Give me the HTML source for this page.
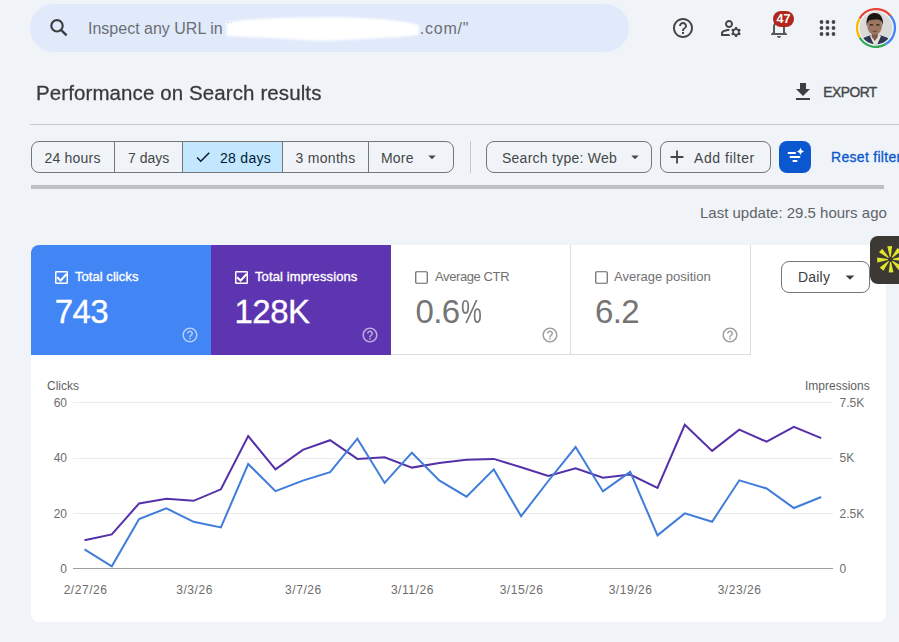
<!DOCTYPE html>
<html><head><meta charset="utf-8">
<style>
*{box-sizing:border-box;margin:0;padding:0}
html,body{width:899px;height:642px;overflow:hidden;background:#f0f4f9;font-family:"Liberation Sans",sans-serif;position:relative}
.a{position:absolute;white-space:nowrap;line-height:1}
#search{left:30px;top:4px;width:599px;height:48px;border-radius:24px;background:#e1eafb}
.chipg{left:31px;top:141px;width:423px;height:32px;border:1px solid #747775;border-radius:8px;overflow:hidden;display:flex}
.chipg div{height:30px;border-right:1px solid #747775;position:relative}
.chip{border:1px solid #747775;border-radius:8px;height:32px}
.t14{font-size:14px;color:#444746}
</style></head>
<body>
<div id="search" class="a"></div>
<svg class="a" style="left:44px;top:14px" width="28" height="28" viewBox="44 14 28 28"><circle cx="57" cy="25.8" r="5.7" fill="none" stroke="#3c4043" stroke-width="2.2"/><path d="M61 29.8 L66.6 35.4" stroke="#3c4043" stroke-width="2.4"/></svg>
<div class="a" style="left:88px;top:20.5px;font-size:16px;color:#6c7075">Inspect any URL in "<span style="display:inline-block;width:187px"></span><span style="letter-spacing:.8px">.com/"</span></div>
<svg class="a" style="left:220px;top:12px" width="210" height="34"><defs><filter id="bl"><feGaussianBlur stdDeviation="0.9"/></filter></defs><path filter="url(#bl)" fill="#fff" d="M6.5 10 Q30 7 57.9 6 Q90 5 120 5.3 Q150 6 166.9 7.8 Q190 10 199 13.5 L199 22.5 Q185 25 166.9 25.6 Q140 27.5 104.6 28.7 Q85 28.5 73.5 27.2 Q40 25.5 6.5 24 Z"/></svg>

<!-- top icons -->
<svg class="a" style="left:671px;top:16px" width="24" height="24" viewBox="0 0 24 24"><path fill="#444746" d="M11 18h2v-2h-2v2zm1-16C6.48 2 2 6.48 2 12s4.48 10 10 10 10-4.48 10-10S17.52 2 12 2zm0 18c-4.41 0-8-3.590-8-8s3.59-8 8-8 8 3.59 8 8-3.59 8-8 8zm0-14c-2.21 0-4 1.79-4 4h2c0-1.1.9-2 2-2s2 .9 2 2c0 2-3 1.75-3 5h2c0-2.25 3-2.5 3-5 0-2.21-1.79-4-4-4z"/></svg>
<svg class="a" style="left:719px;top:16px" width="24" height="24" viewBox="0 0 24 24"><path fill="#444746" d="M4 18v-.65c0-.34.16-.66.41-.81C6.1 15.53 8.03 15 10 15c.03 0 .05 0 .08.01.1-.7.3-1.37.59-1.98-.22-.02-.44-.03-.67-.03-2.42 0-4.68.67-6.61 1.82-.88.52-1.390 1.50-1.39 2.53V20h9.26c-.42-.6-.75-1.28-.97-2H4zM10 12c2.21 0 4-1.79 4-4s-1.79-4-4-4-4 1.79-4 4 1.79 4 4 4zm0-6c1.1 0 2 .9 2 2s-.9 2-2 2-2-.9-2-2 .9-2 2-2zM20.75 16c0-.22-.03-.42-.06-.63l1.14-1.01-1-1.73-1.45.49c-.32-.27-.68-.48-1.08-.63L18 11h-2l-.3 1.49c-.4.15-.76.36-1.08.63l-1.45-.49-1 1.73 1.14 1.01c-.03.21-.06.41-.06.63s.03.42.06.63l-1.14 1.01 1 1.73 1.45-.49c.32.27.68.48 1.08.63L16 21h2l.3-1.49c.4-.15.76-.36 1.08-.63l1.45.49 1-1.730-1.14-1.01c.03-.21.06-.41.06-.63zM17 18c-1.1 0-2-.9-2-2s.9-2 2-2 2 .9 2 2-.9 2-2 2z"/></svg>
<svg class="a" style="left:767px;top:16px" width="24" height="24" viewBox="0 0 24 24"><path fill="#55585c" d="M12 22c1.1 0 2-.9 2-2h-4c0 1.1.89 2 2 2zm6-6v-5c0-3.07-1.64-5.64-4.5-6.32V4c0-.83-.67-1.5-1.5-1.5s-1.5.67-1.5 1.5v.68C7.63 5.36 6 7.92 6 11v5l-2 2v1h16v-1l-2-2zm-2 1H8v-6c0-2.48 1.51-4.5 4-4.5s4 2.02 4 4.5v6z"/></svg>
<div class="a" style="left:773px;top:11px;width:21px;height:16px;border-radius:8px;background:#b3261e;color:#fff;font-size:12.5px;font-weight:700;text-align:center;line-height:16.5px">47</div>
<svg class="a" style="left:815px;top:16px" width="24" height="24" viewBox="0 0 24 24"><g fill="#444746"><circle cx="6.5" cy="6" r="1.9"/><circle cx="12.5" cy="6" r="1.9"/><circle cx="18.5" cy="6" r="1.9"/><circle cx="6.5" cy="12" r="1.9"/><circle cx="12.5" cy="12" r="1.9"/><circle cx="18.5" cy="12" r="1.9"/><circle cx="6.5" cy="18" r="1.9"/><circle cx="12.5" cy="18" r="1.9"/><circle cx="18.5" cy="18" r="1.9"/></g></svg>
<svg class="a" style="left:856px;top:8px" width="40" height="40" viewBox="0 0 40 40">
<defs><clipPath id="av"><circle cx="20" cy="20" r="16.3"/></clipPath></defs>
<g fill="none" stroke-width="2.3"><path d="M3.63 10.55A18.9 18.9 0 0 1 34.48 7.85" stroke="#ea4335"/><path d="M34.48 7.85A18.9 18.9 0 0 1 29.45 36.37" stroke="#4285f4"/><path d="M29.45 36.37A18.9 18.9 0 0 1 3.63 29.45" stroke="#34a853"/><path d="M3.63 29.45A18.9 18.9 0 0 1 3.63 10.55" stroke="#fbbc04"/></g>
<g clip-path="url(#av)"><rect width="40" height="40" fill="#dadad8"/>
<path d="M2 40 Q4 30 11 28.5 L17 26.5 L22 26.5 L28 28.5 Q35 30 38 40 Z" fill="#2d3852"/>
<path d="M14 28 L17.5 26 L21.5 26 L25 28 L21 37 L18 37 Z" fill="#e6e2dc"/>
<path d="M15.8 23 L21.8 23 L21.8 29 L18.8 33 L15.8 29 Z" fill="#7d5a47"/>
<ellipse cx="18.6" cy="17.8" rx="7.4" ry="9.2" fill="#9b7662"/>
<path d="M10.6 18 Q9.5 5.5 18.5 5 Q27.5 5 27 17.5 Q26 12.5 22.5 11.5 Q17 11 13 12.5 Q11.3 14.5 10.6 18Z" fill="#1c1713"/>
<path d="M13.8 16.8 L17 16.8 M20.3 16.8 L23.5 16.8" stroke="#2a1d16" stroke-width="1.2"/>
<path d="M16.8 23.3 L20.8 23.3" stroke="#5b3a2c" stroke-width=".9"/>
</g></svg>

<!-- title -->
<div class="a" style="left:36px;top:83px;font-size:20.5px;color:#1f1f1f;opacity:.88;-webkit-text-stroke:.3px #1f1f1f;letter-spacing:.1px">Performance on Search results</div>
<svg class="a" style="left:791px;top:80px" width="24" height="24" viewBox="0 0 24 24"><path fill="#3c4043" d="M19 9h-4V3H9v6H5l7 7 7-7zM5 18v2h14v-2H5z"/></svg>
<div class="a" style="left:823.3px;top:86.3px;font-size:13.8px;font-weight:400;-webkit-text-stroke:.4px #444746;color:#444746;letter-spacing:-.5px">EXPORT</div>
<div class="a" style="left:30px;top:124px;width:869px;height:1px;background:#c7c7c7"></div>

<!-- chips -->
<div class="a chipg">
 <div style="width:83px"><span class="a t14" style="left:12.5px;top:9px;letter-spacing:.2px">24 hours</span></div>
 <div style="width:68px"><span class="a t14" style="left:13px;top:9px">7 days</span></div>
 <div style="width:100px;background:#c2e7ff"><svg class="a" style="left:10.5px;top:5.5px" width="18" height="18" viewBox="0 0 24 24"><path fill="#0a1a2a" d="M9 16.17L4.83 12l-1.42 1.41L9 19 21 7l-1.41-1.41z"/></svg><span class="a t14" style="left:37px;top:9px;color:#001d35;letter-spacing:.3px">28 days</span></div>
 <div style="width:86px"><span class="a t14" style="left:12.5px;top:9px;letter-spacing:.3px">3 months</span></div>
 <div style="width:84px;border-right:none"><span class="a t14" style="left:12px;top:9px;letter-spacing:.2px">More</span><svg class="a" style="left:57.8px;top:12px" width="10" height="6" viewBox="0 0 10 6"><path fill="#444746" d="M1.3 1.5h7.4L5 5.2z"/></svg></div>
</div>
<div class="a" style="left:470px;top:141px;width:1px;height:32px;background:#c7c7c7"></div>
<div class="a chip" style="left:486px;top:141px;width:166px"><span class="a t14" style="left:15px;top:9px;letter-spacing:.25px">Search type: Web</span><svg class="a" style="left:143px;top:12px" width="10" height="6" viewBox="0 0 10 6"><path fill="#444746" d="M1.3 1.5h7.4L5 5.2z"/></svg></div>
<div class="a chip" style="left:660px;top:141px;width:111px"><svg class="a" style="left:5px;top:4px" width="22" height="22" viewBox="0 0 24 24"><path fill="#444746" d="M19 13h-6v6h-2v-6H5v-2h6V5h2v6h6v2z"/></svg><span class="a t14" style="left:33px;top:9px;letter-spacing:.55px">Add filter</span></div>
<div class="a" style="left:779px;top:141px;width:32px;height:32px;border-radius:8px;background:#0b57d0"></div>
<svg class="a" style="left:780px;top:142px" width="30" height="30" viewBox="780 142 30 30"><g stroke="#fff" stroke-width="1.8" stroke-linecap="round"><path d="M788.5 153h6.6M790.5 157h9M793.3 161h3.3"/></g><path fill="#fff" d="M800.5 147.6Q801.2 150.9 804.3 151.5Q801.2 152.1 800.5 155.3Q799.8 152.1 796.7 151.5Q799.8 150.9 800.5 147.6Z"/></svg>
<div class="a" style="left:831px;top:150px;font-size:14px;color:#0b57d0;-webkit-text-stroke:.3px #0b57d0;letter-spacing:.3px">Reset filter</div>
<div class="a" style="left:31px;top:185px;width:853px;height:4px;background:#bdc1c6"></div>
<div class="a" style="left:700px;top:204.5px;font-size:15px;color:#5f6368">Last update: 29.5 hours ago</div>

<!-- card -->
<div class="a" style="left:31px;top:245px;width:855px;height:377px;background:#fff;border-radius:8px"></div>
<div class="a" style="left:31px;top:245px;width:180px;height:110px;background:#4285f4;border-top-left-radius:8px"></div>
<div class="a" style="left:211px;top:245px;width:180px;height:110px;background:#5e35b1"></div>
<div class="a" style="left:391px;top:245px;width:180px;height:110px;border-right:1px solid #dadce0;border-bottom:1px solid #dadce0"></div>
<div class="a" style="left:571px;top:245px;width:180px;height:110px;border-right:1px solid #dadce0;border-bottom:1px solid #dadce0"></div>

<!-- tile content -->
<svg class="a" style="left:55px;top:271px" width="13" height="13" viewBox="0 0 13 13"><rect x=".75" y=".75" width="11.5" height="11.5" rx=".6" fill="none" stroke="#fff" stroke-width="1.5"/><path d="M2 6.3 L5.6 9.6 L11.6 3" stroke="#fff" stroke-width="2.1" fill="none"/></svg>
<div class="a" style="left:75px;top:270px;font-size:13px;font-weight:400;-webkit-text-stroke:.35px #fff;letter-spacing:.05px;color:#fff">Total clicks</div>
<div class="a" style="left:54.8px;top:295px;font-size:33px;color:#fff;-webkit-text-stroke:.3px #fff;letter-spacing:-.6px">743</div>
<svg class="a" style="left:235px;top:271px" width="13" height="13" viewBox="0 0 13 13"><rect x=".75" y=".75" width="11.5" height="11.5" rx=".6" fill="none" stroke="#fff" stroke-width="1.5"/><path d="M2 6.3 L5.6 9.6 L11.6 3" stroke="#fff" stroke-width="2.1" fill="none"/></svg>
<div class="a" style="left:255px;top:270px;font-size:13px;font-weight:400;-webkit-text-stroke:.35px #fff;letter-spacing:.12px;color:#fff">Total impressions</div>
<div class="a" style="left:234.5px;top:295px;font-size:33px;color:#fff;-webkit-text-stroke:.3px #fff;letter-spacing:-.5px">128K</div>
<svg class="a" style="left:415px;top:271px" width="13" height="13" viewBox="0 0 13 13"><rect x=".75" y=".75" width="11.5" height="11.5" rx="1" fill="none" stroke="#666" stroke-width="1.2"/></svg>
<div class="a" style="left:435px;top:270px;font-size:13px;color:#717171;letter-spacing:-.4px">Average CTR</div>
<div class="a" style="left:415.5px;top:295px;font-size:33px;color:#757575;letter-spacing:-.6px">0.6<span style="display:inline-block;transform:scaleX(.71);transform-origin:0 0;margin-left:1.6px">%</span></div>
<svg class="a" style="left:595px;top:271px" width="13" height="13" viewBox="0 0 13 13"><rect x=".75" y=".75" width="11.5" height="11.5" rx="1" fill="none" stroke="#666" stroke-width="1.2"/></svg>
<div class="a" style="left:614px;top:270px;font-size:13px;color:#717171">Average position</div>
<div class="a" style="left:595px;top:295px;font-size:33px;color:#757575;letter-spacing:-.6px">6.2</div>
<!-- help icons -->
<svg class="a" style="left:181px;top:326px" width="18" height="18" viewBox="0 0 24 24"><path fill="rgba(255,255,255,.6)" d="M11 18h2v-2h-2v2zm1-16C6.48 2 2 6.48 2 12s4.48 10 10 10 10-4.48 10-10S17.52 2 12 2zm0 18c-4.41 0-8-3.59-8-8s3.59-8 8-8 8 3.59 8 8-3.59 8-8 8zm0-14c-2.21 0-4 1.79-4 4h2c0-1.1.9-2 2-2s2 .9 2 2c0 2-3 1.75-3 5h2c0-2.25 3-2.5 3-5 0-2.21-1.79-4-4-4z"/></svg>
<svg class="a" style="left:361px;top:326px" width="18" height="18" viewBox="0 0 24 24"><path fill="rgba(255,255,255,.6)" d="M11 18h2v-2h-2v2zm1-16C6.48 2 2 6.480 2 12s4.48 10 10 10 10-4.48 10-10S17.52 2 12 2zm0 18c-4.41 0-8-3.59-8-8s3.59-8 8-8 8 3.59 8 8-3.59 8-8 8zm0-14c-2.21 0-4 1.79-4 4h2c0-1.1.9-2 2-2s2 .9 2 2c0 2-3 1.75-3 5h2c0-2.25 3-2.5 3-5 0-2.21-1.79-4-4-4z"/></svg>
<svg class="a" style="left:541px;top:326px" width="18" height="18" viewBox="0 0 24 24"><path fill="#9e9e9e" d="M11 18h2v-2h-2v2zm1-16C6.48 2 2 6.48 2 12s4.48 10 10 10 10-4.48 10-10S17.52 2 12 2zm0 18c-4.41 0-8-3.59-8-8s3.59-8 8-8 8 3.59 8 8-3.59 8-8 8zm0-14c-2.21 0-4 1.79-4 4h2c0-1.1.9-2 2-2s2 .9 2 2c0 2-3 1.75-3 5h2c0-2.25 3-2.5 3-5 0-2.21-1.79-4-4-4z"/></svg>
<svg class="a" style="left:721px;top:326px" width="18" height="18" viewBox="0 0 24 24"><path fill="#9e9e9e" d="M11 18h2v-2h-2v2zm1-16C6.48 2 2 6.48 2 12s4.48 10 10 10 10-4.48 10-10S17.52 2 12 2zm0 18c-4.41 0-8-3.59-8-8s3.59-8 8-8 8 3.59 8 8-3.59 8-8 8zm0-14c-2.21 0-4 1.79-4 4h2c0-1.1.9-2 2-2s2 .9 2 2c0 2-3 1.75-3 5h2c0-2.25 3-2.5 3-5 0-2.21-1.79-4-4-4z"/></svg>

<!-- daily -->
<div class="a" style="left:781px;top:261px;width:89px;height:32px;border:1px solid #747775;border-radius:8px"></div>
<div class="a" style="left:798px;top:270px;font-size:14px;color:#3c4043;letter-spacing:.2px">Daily</div>
<svg class="a" style="left:845px;top:275px" width="10" height="6" viewBox="0 0 10 6"><path fill="#3c4043" d="M.6 .4h8.8L5 4.8z"/></svg>

<!-- floating widget -->
<div class="a" style="left:870px;top:236px;width:40px;height:48px;border-radius:8px;background:#3c3934"></div>
<svg class="a" style="left:870px;top:236px" width="29" height="48" viewBox="0 0 29 48"><g fill="#e2e629" transform="translate(20.4 23.3)"><path d="M-0.5 -2.6 L-2.4 -13.2 L2.4 -13.2 L0.5 -2.6Z" transform="rotate(-3)"/><path d="M-0.5 -2.6 L-2.4 -13.2 L2.4 -13.2 L0.5 -2.6Z" transform="rotate(42)"/><path d="M-0.5 -2.6 L-2.4 -13.2 L2.4 -13.2 L0.5 -2.6Z" transform="rotate(87)"/><path d="M-0.5 -2.6 L-2.4 -13.2 L2.4 -13.2 L0.5 -2.6Z" transform="rotate(132)"/><path d="M-0.5 -2.6 L-2.4 -13.2 L2.4 -13.2 L0.5 -2.6Z" transform="rotate(177)"/><path d="M-0.5 -2.6 L-2.4 -13.2 L2.4 -13.2 L0.5 -2.6Z" transform="rotate(222)"/><path d="M-0.5 -2.6 L-2.4 -13.2 L2.4 -13.2 L0.5 -2.6Z" transform="rotate(267)"/><path d="M-0.5 -2.6 L-2.4 -13.2 L2.4 -13.2 L0.5 -2.6Z" transform="rotate(312)"/></g></svg>

<!-- chart -->
<svg class="a" style="left:0;top:0" width="899" height="642">
<g font-family="Liberation Sans" font-size="12" fill="#6d6d6d">
<text x="47" y="390" fill="#616161">Clicks</text>
<text x="869.7" y="390" text-anchor="end" fill="#616161">Impressions</text>
<text x="67" y="406.7" text-anchor="end">60</text>
<text x="67" y="462.3" text-anchor="end">40</text>
<text x="67" y="517.5" text-anchor="end">20</text>
<text x="67" y="572.6" text-anchor="end">0</text>
<text x="839.5" y="406.7">7.5K</text>
<text x="839.5" y="462.3">5K</text>
<text x="839.5" y="517.5">2.5K</text>
<text x="839.5" y="572.6">0</text>
<text x="85.6" y="594" text-anchor="middle" letter-spacing=".55">2/27/26</text>
<text x="194.6" y="594" text-anchor="middle" letter-spacing=".55">3/3/26</text>
<text x="303.4" y="594" text-anchor="middle" letter-spacing=".55">3/7/26</text>
<text x="412.4" y="594" text-anchor="middle" letter-spacing=".55">3/11/26</text>
<text x="521.6" y="594" text-anchor="middle" letter-spacing=".55">3/15/26</text>
<text x="630.6" y="594" text-anchor="middle" letter-spacing=".55">3/19/26</text>
<text x="739.6" y="594" text-anchor="middle" letter-spacing=".55">3/23/26</text>
</g>
<g stroke="#ebebeb" stroke-width="1">
<line x1="73" y1="402.5" x2="833" y2="402.5"/>
<line x1="73" y1="458.5" x2="833" y2="458.5"/>
<line x1="73" y1="513.5" x2="833" y2="513.5"/>
</g>
<line x1="73" y1="568.5" x2="833" y2="568.5" stroke="#9e9e9e" stroke-width="1"/>
<polyline fill="none" stroke="#5531a9" stroke-width="2" points="84.5,540.2 111.8,534.4 139.1,503.4 166.4,498.8 193.6,500.8 220.9,489.3 248.2,436.1 275.5,469.4 302.8,449.9 330.1,440.2 357.4,458.9 384.6,457.3 411.9,467.6 439.2,463.0 466.5,459.7 493.8,458.9 521.1,467.3 548.3,476.0 575.6,468.3 602.9,477.8 630.2,474.5 657.5,488.0 684.8,424.8 712.1,450.9 739.3,429.7 766.6,441.7 793.9,426.9 821.2,438.1"/>
<polyline fill="none" stroke="#407ddb" stroke-width="2" points="84.5,549.4 111.8,566.3 139.1,519.0 166.4,508.3 193.6,521.8 220.9,527.4 248.2,464.0 275.5,491.1 302.8,480.6 330.1,472.2 357.4,438.7 384.6,482.9 411.9,452.7 439.2,480.4 466.5,496.7 493.8,469.4 521.1,516.2 548.3,481.0 575.6,447.1 602.9,491.4 630.2,471.9 657.5,535.4 684.8,513.4 712.1,521.8 739.3,480.3 766.6,488.5 793.9,508.0 821.2,497.0"/>
</svg>
</body></html>
